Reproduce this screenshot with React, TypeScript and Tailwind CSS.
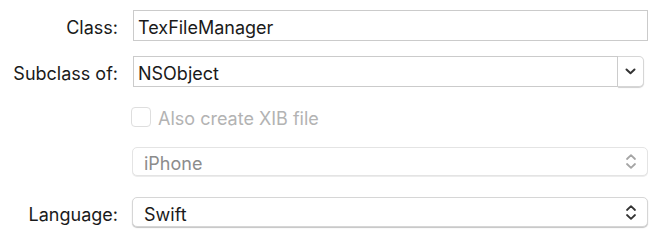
import type { ReactNode } from 'react';

const FONT = { fontFamily: 'Inter, "Liberation Sans", sans-serif' };

function Label({ children }: { children: ReactNode }) {
  return (
    <div className="w-[118px] shrink-0 pt-[4px] text-right text-[18px] text-[#1a1a1a]">
      {children}
    </div>
  );
}

function Chevron({ className = '' }: { className?: string }) {
  return (
    <svg width="11" height="7" viewBox="0 0 11 7" className={className}>
      <path d="M1.5 1.5 L5.5 5.2 L9.5 1.5" fill="none" stroke="currentColor" strokeWidth="2" strokeLinecap="round" strokeLinejoin="round" />
    </svg>
  );
}

function Stepper({ className = '' }: { className?: string }) {
  return (
    <svg width="12" height="17" viewBox="0 0 12 17" className={className}>
      <path d="M2 6 L6 2.2 L10 6" fill="none" stroke="currentColor" strokeWidth="1.8" strokeLinecap="round" strokeLinejoin="round" />
      <path d="M2 11 L6 14.8 L10 11" fill="none" stroke="currentColor" strokeWidth="1.8" strokeLinecap="round" strokeLinejoin="round" />
    </svg>
  );
}

function PopUp({ value, disabled }: { value: string; disabled?: boolean }) {
  return (
    <div
      className={`flex flex-1 items-center justify-between rounded-[5px] bg-white pl-[11px] pr-[10px] ${
        disabled
          ? 'border border-[#e4e4e4] text-[#8c8c8c] shadow-[0_1px_0_#ececec]'
          : 'border border-[#d6d6d6] text-[#1a1a1a] shadow-[0_1px_1px_#c4c4c4]'
      }`}
    >
      <span className="pt-[4px] text-[18px]">{value}</span>
      <Stepper className={disabled ? 'text-[#a5a5a5]' : 'text-[#333]'} />
    </div>
  );
}

export default function App() {
  return (
    <div className="w-[666px] h-[240px] bg-white" style={FONT}>
      <div className="flex flex-col pt-[10px]">
        {/* Class */}
        <div className="flex items-center gap-[15px] h-[31px]">
          <Label>Class:</Label>
          <div className="flex h-full w-[515px] items-center border border-[#cbcbcb] bg-white pl-[4px] pt-[4px] text-[18px] text-[#1a1a1a]">
            TexFileManager
          </div>
        </div>

        {/* Subclass */}
        <div className="mt-[15px] flex items-center gap-[15px] h-[31px]">
          <Label>Subclass of:</Label>
          <div className="flex h-full w-[511px]">
            <div className="flex flex-1 items-center border border-[#cbcbcb] bg-white pl-[4px] pt-[4px] text-[18px] text-[#1a1a1a]">
              NSObject
            </div>
            <div className="flex w-[26px] items-center justify-center rounded-r-[5px] border border-l-0 border-[#d6d6d6] bg-white text-[#333] shadow-[0_1px_1px_#cfcfcf]">
              <Chevron />
            </div>
          </div>
        </div>

        {/* Checkbox */}
        <div className="mt-[20px] flex items-center gap-[15px] h-[20px]">
          <div className="w-[118px] shrink-0" />
          <div className="flex items-center gap-[7px] -ml-[2px]">
            <div className="h-[20px] w-[20px] rounded-[4px] border border-[#dedede] bg-white" />
            <span className="pt-[2px] text-[18px] text-[#b3b3b3]">Also create XIB file</span>
          </div>
        </div>

        {/* Device */}
        <div className="mt-[20px] flex items-center gap-[15px] h-[29px]">
          <div className="w-[118px] shrink-0" />
          <div className="flex h-full w-[516px] -ml-[1px]">
            <PopUp value="iPhone" disabled />
          </div>
        </div>

        {/* Language */}
        <div className="mt-[21px] flex items-center gap-[15px] h-[30px]">
          <Label>Language:</Label>
          <div className="flex h-full w-[516px] -ml-[1px]">
            <PopUp value="Swift" />
          </div>
        </div>
      </div>
    </div>
  );
}
